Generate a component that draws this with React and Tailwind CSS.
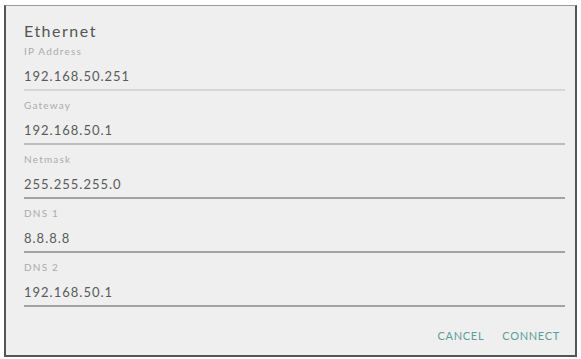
export default function App() {
  const fields = [
    { label: "IP Address", value: "192.168.50.251", line: "bg-[#d6d6d6]" },
    { label: "Gateway", value: "192.168.50.1", line: "bg-[#bdbdbd]" },
    { label: "Netmask", value: "255.255.255.0", line: "bg-[#a3a3a3]" },
    { label: "DNS 1", value: "8.8.8.8", line: "bg-[#a3a3a3]" },
    { label: "DNS 2", value: "192.168.50.1", line: "bg-[#a3a3a3]" },
  ];
  return (
    <div className="w-[581px] h-[359px] bg-white pt-[5px] px-[4px]" style={{ fontFamily: "Lato, 'Open Sans', sans-serif" }}>
      <div className="h-[352px] bg-[#efefef] border-l-2 border-r-2 border-b-2 border-t border-l-[#555] border-r-[#555] border-b-[#555] border-t-[#9a9a9a] pt-[15px] pl-[18px] pr-[10px] flex flex-col">
        <div className="h-[20px] leading-[20px] text-[16px] tracking-[1.5px] text-[#555]">Ethernet</div>
        <div className="mt-[4px] flex flex-col">
          {fields.map((f) => (
            <div key={f.label} className="flex flex-col h-[54px]">
              <div className="h-[12px] leading-[12px] text-[10px] tracking-[1.2px] text-[#ababab]">{f.label}</div>
              <div className="mt-[9px] h-[20px] leading-[20px] text-[13px] tracking-[1px] text-[#5a5a5a]">{f.value}</div>
              <div className={`mt-[3px] h-[2px] ${f.line}`}></div>
            </div>
          ))}
        </div>
        <div className="flex justify-end gap-[18px] pr-[5px] mt-[14px] text-[11px] leading-[14px] text-[#5a9e98] tracking-[0.7px]">
          <span>CANCEL</span>
          <span>CONNECT</span>
        </div>
      </div>
    </div>
  );
}
